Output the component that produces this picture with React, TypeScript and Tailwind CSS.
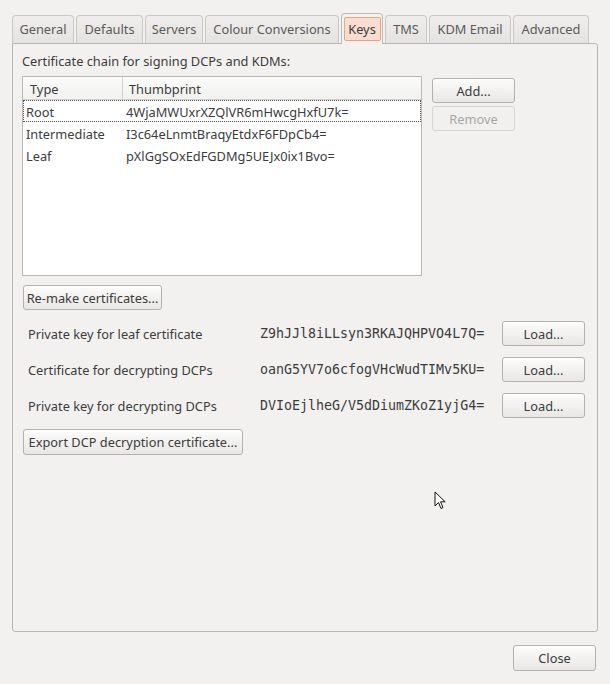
import React from "react";

const tabs: [string, string][] = [
  ["General", "w-[62px]"],
  ["Defaults", "w-[67px]"],
  ["Servers", "w-[58px]"],
  ["Colour Conversions", "w-[134px]"],
  ["Keys", "w-[42px]"],
  ["TMS", "w-[42px]"],
  ["KDM Email", "w-[82px]"],
  ["Advanced", "w-[76px]"],
];

function Btn({ children, className = "", disabled = false }: { children: React.ReactNode; className?: string; disabled?: boolean }) {
  return (
    <div
      className={
        "flex items-center justify-center rounded-[3px] border " +
        (disabled
          ? "border-[#d6d4d0] bg-[#f1f0ee] text-[#a8a6a2] "
          : "border-[#b3b1ac] bg-gradient-to-b from-[#fcfcfb] to-[#e9e7e4] text-[#3c3c3c] shadow-[inset_0_1px_0_#ffffff] ") +
        className
      }
    >
      {children}
    </div>
  );
}

const rows = [
  ["Root", "4WjaMWUxrXZQlVR6mHwcgHxfU7k="],
  ["Intermediate", "I3c64eLnmtBraqyEtdxF6FDpCb4="],
  ["Leaf", "pXlGgSOxEdFGDMg5UEJx0ix1Bvo="],
];

const keys = [
  ["Private key for leaf certificate", "Z9hJJl8iLLsyn3RKAJQHPVO4L7Q="],
  ["Certificate for decrypting DCPs", "oanG5YV7o6cfogVHcWudTIMv5KU="],
  ["Private key for decrypting DCPs", "DVIoEjlheG/V5dDiumZKoZ1yjG4="],
];

export default function App() {
  return (
    <div
      className="relative w-[610px] h-[684px] bg-[#f2f1f0] text-[#3c3c3c] text-[12.8px] leading-[18px]"
      style={{ fontFamily: '"Noto Sans", "Open Sans", sans-serif' }}
    >
      {/* tabs */}
      <div className="flex items-end gap-[2px] pl-[12px] pt-[12px] h-[43px]">
        {tabs.map(([t, w]) =>
          t === "Keys" ? (
            <div
              key={t}
              className={
                "relative z-10 h-[31px] -mb-px flex items-start justify-center pt-[3px] rounded-t-[4px] border border-b-0 border-[#bdbbb7] bg-[#f2f1f0] " +
                w
              }
            >
              <div className="h-[24px] w-[37px] flex items-center justify-center pb-px rounded-[2px] border border-[#eea283] bg-[#f8ddd0] text-[#3c3c3c]">
                {t}
              </div>
            </div>
          ) : (
            <div
              key={t}
              className={
                "h-[28px] flex items-center justify-center pb-[2px] rounded-t-[4px] border border-b-0 border-[#cac8c4] bg-gradient-to-b from-[#efeeec] to-[#e5e3e0] text-[#5a5a5a] " +
                w
              }
            >
              {t}
            </div>
          )
        )}
      </div>

      {/* panel */}
      <div className="ml-[12px] w-[586px] h-[589px] border border-[#b8b6b2] rounded-b-[3px] rounded-tr-[3px] pl-[9px] pt-[8px]">
        <div className="h-[18px]">Certificate chain for signing DCPs and KDMs:</div>

        <div className="flex mt-[6px]">
          <div className="w-[400px] h-[200px] border border-[#bab8b4] bg-white">
            <div className="flex h-[23px] border-b border-[#d3d1cd] bg-gradient-to-b from-[#fbfbfa] to-[#f1f0ee]">
              <div className="w-[100px] border-r border-[#d3d1cd] pl-[7px] pt-px flex items-center">Type</div>
              <div className="pl-[6px] pt-px flex items-center">Thumbprint</div>
            </div>
            {rows.map(([a, b], i) => (
              <div
                key={a}
                className={
                  "flex h-[22px] items-center pt-px " +
                  (i === 0 ? "border border-dotted border-[#555555]" : "border border-transparent")
                }
              >
                <div className="w-[100px] pl-[2px]">{a}</div>
                <div className="pl-[2px]">{b}</div>
              </div>
            ))}
          </div>
          <div className="ml-[10px] mt-[2px] flex flex-col gap-[3px]">
            <Btn className="w-[83px] h-[25px]">Add...</Btn>
            <Btn className="w-[83px] h-[25px]" disabled>
              Remove
            </Btn>
          </div>
        </div>

        <Btn className="mt-[9px] ml-px w-[139px] h-[25px]">Re-make certificates...</Btn>

        <div className="mt-[11px] flex flex-col gap-[11px]">
          {keys.map(([l, v]) => (
            <div key={l} className="grid grid-cols-[232px_242px_83px] items-center h-[25px] pl-[6px]">
              <div>{l}</div>
              <div
                className="text-[13.3px] text-[#3c3c3c]"
                style={{ fontFamily: '"DejaVu Sans Mono", monospace' }}
              >
                {v}
              </div>
              <Btn className="w-[83px] h-[25px]">Load...</Btn>
            </div>
          ))}
        </div>

        <Btn className="mt-[11px] ml-px w-[220px] h-[26px]">Export DCP decryption certificate...</Btn>
      </div>

      <div className="flex justify-end pr-[14px] mt-[13px]">
        <Btn className="w-[83px] h-[26px]">Close</Btn>
      </div>

      {/* mouse cursor */}
      <svg className="absolute left-[434px] top-[491px]" width="13" height="20" viewBox="0 0 13 20">
        <path d="M1 1 L1 15 L4.5 11.5 L7 17.5 L9 16.6 L6.6 10.8 L11.2 10.8 Z" fill="#ffffff" stroke="#111111" strokeWidth="1" strokeLinejoin="round" />
      </svg>
    </div>
  );
}
